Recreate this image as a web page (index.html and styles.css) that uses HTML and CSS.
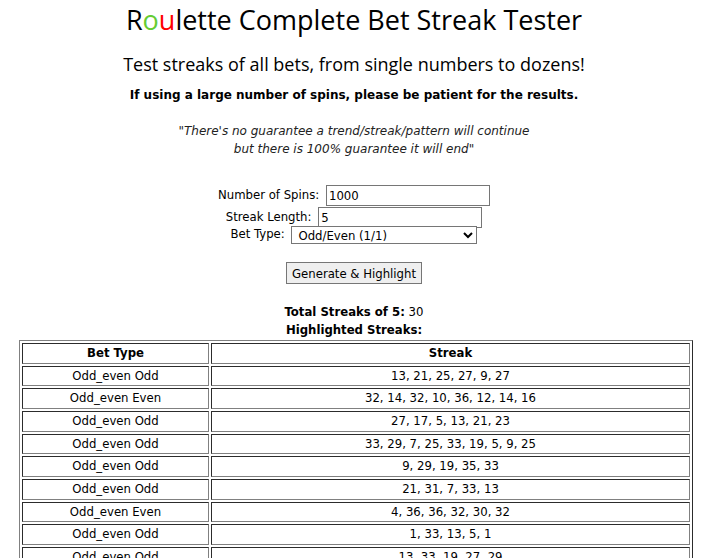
FILE: index.html
```html
<!DOCTYPE html>
<html lang="en">
<head>
  <meta charset="UTF-8" />
  <title>Roulette Complete Bet Streak Tester</title>
  <meta name="viewport" content="width=device-width, initial-scale=1.0" />
  <link rel="stylesheet" href="styles.css">
</head>
<body>
  <header class="intro">
    <h1 class="title">R<span class="green">o</span><span class="red">u</span>lette Complete Bet Streak Tester</h1>
    <h2 class="subtitle">Test streaks of all bets, from single numbers to dozens!</h2>
    <p class="notice">If using a large number of spins, please be patient for the results.</p>
    <p class="quote">"There's no guarantee a trend/streak/pattern will continue<br>but there is 100% guarantee it will end"</p>
  </header>

  <form class="tester">
    <div class="field">
      <label for="spins">Number of Spins:</label>
      <input type="text" id="spins" class="text-input" value="1000" />
    </div>
    <div class="field">
      <label for="length">Streak Length:</label>
      <input type="text" id="length" class="text-input" value="5" />
    </div>
    <div class="field field-select">
      <label for="betType">Bet Type:</label>
      <select id="betType" class="bet-select">
        <option>Odd/Even (1/1)</option>
        <option>Red/Black (1/1)</option>
        <option>High/Low (1/1)</option>
        <option>Dozens (2/1)</option>
        <option>Columns (2/1)</option>
        <option>Single Numbers (35/1)</option>
      </select>
    </div>
    <div class="actions">
      <button type="button" class="generate">Generate &amp; Highlight</button>
    </div>
  </form>

  <div class="summary">
    <div><b>Total Streaks of 5:</b> 30</div>
    <div><b>Highlighted Streaks:</b></div>
  </div>

  <table class="streaks">
    <tr><th class="col-type">Bet Type</th><th>Streak</th></tr>
    <tr><td>Odd_even Odd</td><td>13, 21, 25, 27, 9, 27</td></tr>
    <tr><td>Odd_even Even</td><td>32, 14, 32, 10, 36, 12, 14, 16</td></tr>
    <tr><td>Odd_even Odd</td><td>27, 17, 5, 13, 21, 23</td></tr>
    <tr><td>Odd_even Odd</td><td>33, 29, 7, 25, 33, 19, 5, 9, 25</td></tr>
    <tr><td>Odd_even Odd</td><td>9, 29, 19, 35, 33</td></tr>
    <tr><td>Odd_even Odd</td><td>21, 31, 7, 33, 13</td></tr>
    <tr><td>Odd_even Even</td><td>4, 36, 36, 32, 30, 32</td></tr>
    <tr><td>Odd_even Odd</td><td>1, 33, 13, 5, 1</td></tr>
    <tr><td>Odd_even Odd</td><td>13, 33, 19, 27, 29</td></tr>
    <tr><td>Odd_even Even</td><td>28, 6, 10, 22, 4</td></tr>
  </table>
</body>
</html>
```

FILE: styles.css
```css
body {
  margin: 0;
  font-family: 'DejaVu Sans Condensed', 'DejaVu Sans', sans-serif;
  font-size: 13px;
  color: #000;
  background: #fff;
}

.intro {
  text-align: center;
}

.title {
  margin: 0;
  padding-top: 0;
  font-family: 'Open Sans', sans-serif;
  font-weight: 400;
  font-size: 27px;
  line-height: 40px;
}

.green { color: #66cc33; }
.red { color: #ff0000; }

.subtitle {
  margin: 11px 0 0;
  font-family: 'Open Sans', sans-serif;
  font-weight: 400;
  font-size: 18px;
  line-height: 26px;
}

.notice {
  margin: 9px 0 0;
  font-family: 'DejaVu Sans', sans-serif;
  font-weight: bold;
  font-size: 12px;
  line-height: 18px;
}

.quote {
  margin: 18px 0 0;
  font-family: 'DejaVu Sans', sans-serif;
  font-style: italic;
  font-size: 12px;
  line-height: 18px;
  color: #222;
}

.tester {
  margin-top: 26px;
}

.field {
  text-align: center;
  line-height: 21px;
}

.field label {
  margin-right: 3px;
}

.field-select {
  margin-top: -5px;
}

.text-input {
  width: 164px;
  height: 21px;
  box-sizing: border-box;
  padding: 1px 2px;
  border: 1px solid #767676;
  font-family: inherit;
  font-size: 13px;
  vertical-align: middle;
}

.bet-select {
  width: 186px;
  height: 18px;
  box-sizing: border-box;
  border: 1px solid #767676;
  border-radius: 0;
  padding: 0 2px;
  font-family: inherit;
  font-size: 13px;
  background: #fff;
  vertical-align: middle;
}

.actions {
  margin-top: 18px;
  text-align: center;
}

.generate {
  height: 22px;
  padding: 0 5px;
  border: 1px solid #767676;
  border-radius: 0;
  background: #efefef;
  font-family: inherit;
  font-size: 13px;
  color: #000;
}

.summary {
  margin-top: 19px;
  text-align: center;
  line-height: 18px;
}

.streaks {
  width: 674px;
  margin: 1px 0 0 19px;
  border: 1px outset #808080;
  border-spacing: 2px;
}

.streaks th,
.streaks td {
  border: 1px inset #808080;
  padding: 1px;
  line-height: 16.67px;
  text-align: center;
}

.col-type {
  width: 183px;
}
```
